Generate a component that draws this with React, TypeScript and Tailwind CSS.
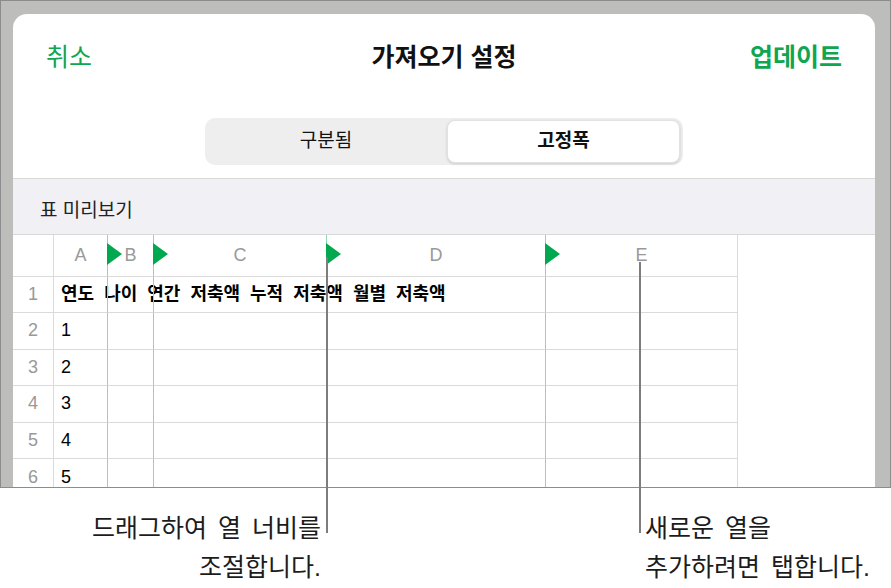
const cols = [
  { letter: 'A', w: 'w-[53px]', marker: false },
  { letter: 'B', w: 'w-[46px]', marker: true },
  { letter: 'C', w: 'w-[173px]', marker: true },
  { letter: 'D', w: 'w-[219px]', marker: true },
  { letter: 'E', w: 'w-[193px]', marker: true },
];

const headers = ['연도', '나이', '연간', '저축액', '누적', '저축액', '월별', '저축액'];

function Marker() {
  return (
    <svg className="absolute left-[-1px] top-[8px]" width="15" height="22" viewBox="0 0 15 22">
      <polygon points="0,0 15,11 0,22" fill="#00a84f" />
    </svg>
  );
}

function Row({ num, height, children }: { num: number | null; height: string; children?: (i: number) => React.ReactNode }) {
  return (
    <div className={`flex ${height}`}>
      <div className="w-[41px] shrink-0 border-r border-b border-r-[#dadada] border-b-[#dadada] flex items-center justify-center text-[18px] text-[#999999]">
        {num}
      </div>
      {cols.map((c, i) => (
        <div
          key={c.letter}
          className={`${c.w} shrink-0 relative border-b border-b-[#dadada] ${c.marker ? 'border-l border-l-[#8fd8ad]' : ''} ${i === 4 ? 'border-r border-r-[#dadada]' : ''}`}
        >
          {children ? children(i) : null}
        </div>
      ))}
    </div>
  );
}

export default function App() {
  return (
    <div className="relative w-[891px] h-[588px] overflow-hidden bg-white font-['Liberation_Sans','Noto_Sans_CJK_KR',sans-serif] text-black">
      {/* device screenshot */}
      <div className="h-[488px] bg-[#bdbebb] border border-[#8c8c8c] pl-[12px] pt-[13px] pr-[15px] overflow-hidden">
        <div className="h-full bg-white rounded-t-[14px] flex flex-col overflow-hidden">
          <div className="h-[88px] shrink-0 grid grid-cols-3 items-center px-[33px] text-[25px]">
            <span className="text-[#10a550]">취소</span>
            <span className="text-center font-bold text-[#111]">가져오기 설정</span>
            <span className="text-right font-semibold text-[#10a550]">업데이트</span>
          </div>

          <div className="mt-[16px] mx-auto w-[478px] h-[47px] shrink-0 rounded-[10px] bg-[#eeeeef] flex">
            <div className="flex-1 flex items-center justify-center text-[19px] text-[#111]">구분됨</div>
            <div className="w-[233px] my-[2px] mr-[3px] rounded-[8px] bg-white shadow-[0_1px_3px_rgba(0,0,0,0.15)] border border-[#e2e2e2] flex items-center justify-center text-[19px] font-bold text-[#111]">
              고정폭
            </div>
          </div>

          <div className="mt-[13px] h-[57px] shrink-0 border-y border-[#d8d8d8] bg-[#f0f0f5] pl-[27px] pt-[19px] text-[19px] leading-[26px] text-[#222]">
            표 미리보기
          </div>

          <div className="flex flex-col">
            <Row num={null} height="h-[42px]">
              {(i) => (
                <>
                  {cols[i].marker && <Marker />}
                  <div className="h-full flex items-center justify-center text-[18px] text-[#999999]">{cols[i].letter}</div>
                </>
              )}
            </Row>
            <Row num={1} height="h-[36px]">
              {(i) =>
                i === 0 ? (
                  <div className="h-full flex items-center gap-[10px] pl-[7px] whitespace-nowrap text-[18px] font-bold">
                    {headers.map((h, k) => (
                      <span key={k}>{h}</span>
                    ))}
                  </div>
                ) : null
              }
            </Row>
            {[1, 2, 3, 4, 5].map((n) => (
              <Row key={n} num={n + 1} height="h-[36.6px]">
                {(i) => (i === 0 ? <div className="h-full flex items-center pl-[7px] text-[18px]">{n}</div> : null)}
              </Row>
            ))}
          </div>
        </div>
      </div>

      {/* callout lines */}
      <div className="absolute left-[326px] top-[257px] w-[2px] h-[276px] bg-[#7d7d7d]" />
      <div className="absolute left-[639px] top-[262px] w-[2px] h-[271px] bg-[#7d7d7d]" />

      {/* captions */}
      <div className="flex text-[25px] leading-[39px] text-[#1c1c1c] [word-spacing:4px]">
        <div className="w-[321px] pt-[21px] text-right">
          드래그하여 열 너비를
          <br />
          조절합니다.
        </div>
        <div className="ml-[324px] pt-[21px]">
          새로운 열을
          <br />
          추가하려면 탭합니다.
        </div>
      </div>
    </div>
  );
}
